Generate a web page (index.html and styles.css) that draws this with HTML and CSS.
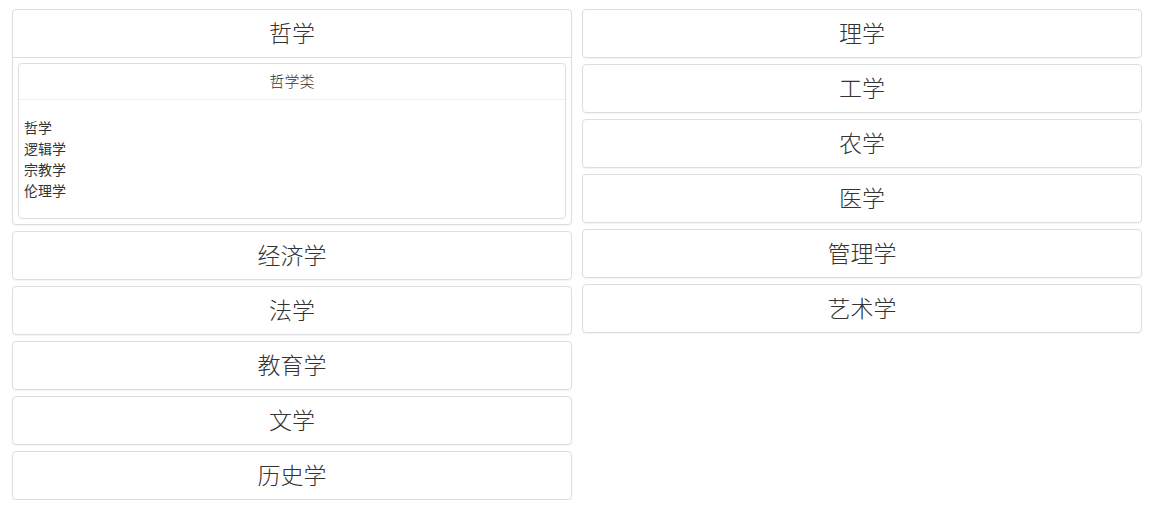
FILE: index.html
```html
<!DOCTYPE html>
<html>
    <head>
        <meta charset="utf-8">
        <title>学科门类</title>
        <link rel="stylesheet" href="styles.css">
    </head>
    <body>
        <div id="container">
            <div class="column">
                <div class="panel open">
                    <div class="panel-heading">哲学</div>
                    <div class="panel-body">
                        <div class="subpanel">
                            <div class="subpanel-heading">哲学类</div>
                            <ul class="subpanel-body">
                                <li>哲学</li>
                                <li>逻辑学</li>
                                <li>宗教学</li>
                                <li>伦理学</li>
                            </ul>
                        </div>
                    </div>
                </div>
                <div class="panel"><div class="panel-heading">经济学</div></div>
                <div class="panel"><div class="panel-heading">法学</div></div>
                <div class="panel"><div class="panel-heading">教育学</div></div>
                <div class="panel"><div class="panel-heading">文学</div></div>
                <div class="panel"><div class="panel-heading">历史学</div></div>
            </div>
            <div class="column">
                <div class="panel"><div class="panel-heading">理学</div></div>
                <div class="panel"><div class="panel-heading">工学</div></div>
                <div class="panel"><div class="panel-heading">农学</div></div>
                <div class="panel"><div class="panel-heading">医学</div></div>
                <div class="panel"><div class="panel-heading">管理学</div></div>
                <div class="panel"><div class="panel-heading">艺术学</div></div>
            </div>
        </div>
    </body>
</html>
```

FILE: styles.css
```css
body {
    margin: 0;
    font-family: "Liberation Sans", "Noto Sans CJK SC", sans-serif;
    color: #333;
    background-color: #fff;
}

#container {
    display: grid;
    grid-template-columns: 560px 560px;
    column-gap: 10px;
    padding: 9px 0 0 12px;
    align-items: start;
}

.column {
    display: flex;
    flex-direction: column;
    gap: 6px;
}

.panel {
    border: 1px solid #ddd;
    border-radius: 4px;
    box-shadow: 0 1px 1px rgba(0, 0, 0, 0.05);
}

.panel-heading {
    height: 47px;
    line-height: 48px;
    text-align: center;
    font-size: 23px;
    font-weight: 300;
    cursor: pointer;
}

.panel.open .panel-heading {
    border-bottom: 1px solid #ddd;
}

.panel-body {
    padding: 5px;
}

.subpanel {
    border: 1px solid #ddd;
    border-radius: 4px;
}

.subpanel-heading {
    height: 35px;
    line-height: 36px;
    text-align: center;
    font-size: 15px;
    font-weight: 300;
    border-bottom: 1px solid #eee;
}

.subpanel-body {
    list-style: none;
    margin: 0;
    padding: 18px 5px 16px 5px;
    font-size: 14px;
    line-height: 21px;
}
```
